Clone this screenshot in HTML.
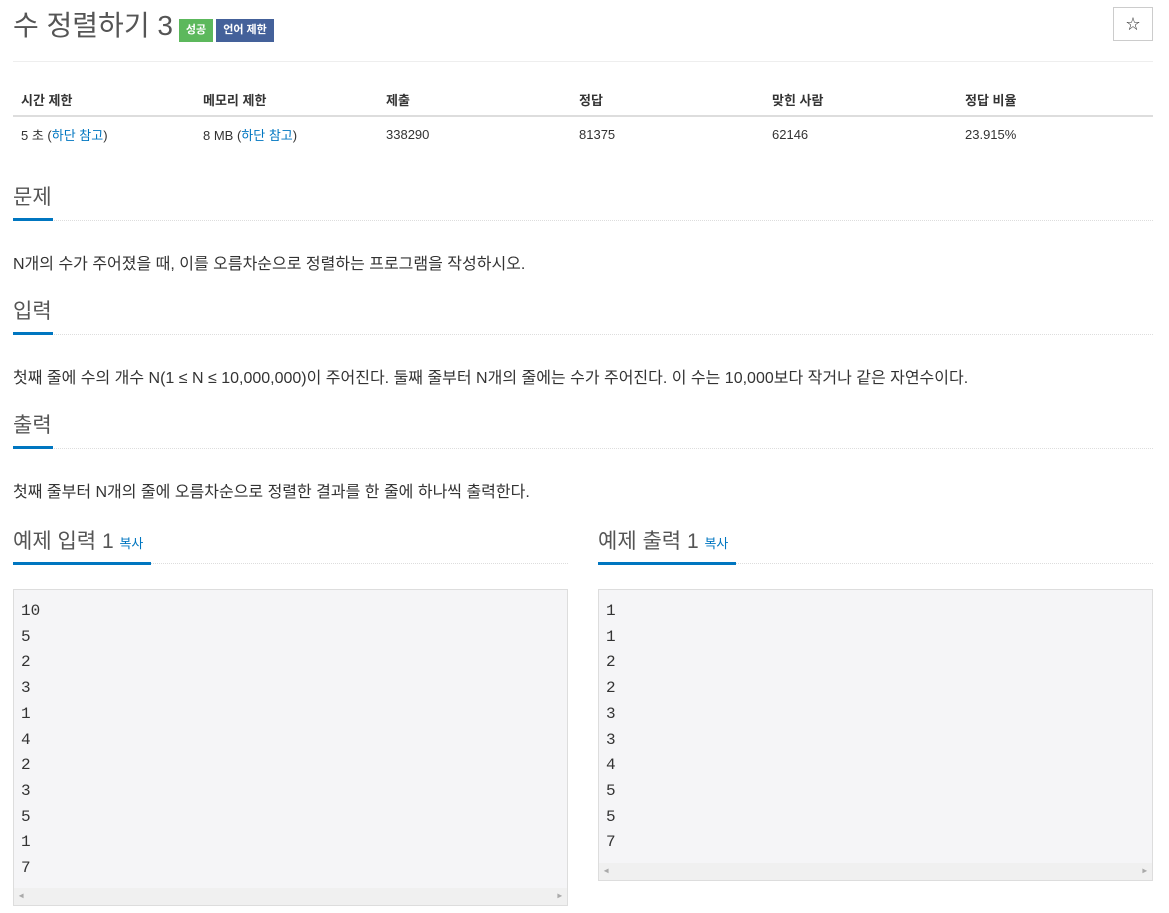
<!DOCTYPE html>
<html><head><meta charset="utf-8"><style>
*{box-sizing:border-box;margin:0;padding:0}
body{width:1169px;height:913px;background:#fff;font-family:"Liberation Sans","Noto Sans CJK KR",sans-serif;color:#333;font-size:14px;position:relative;overflow:hidden}
h1{position:absolute;left:13px;top:6px;font-size:28px;font-weight:400;color:#555;line-height:40px}
.lb{position:absolute;top:19px;height:23px;font-size:11px;color:#fff;line-height:23px;text-align:center;font-weight:bold}
.star{position:absolute;left:1113px;top:7px;width:40px;height:34px;border:1px solid #ccc;text-align:center;line-height:32px;font-size:14px;color:#333}
.hr{position:absolute;left:13px;width:1140px;height:1px;background:#eee}
table{position:absolute;left:13px;top:84px;width:1140px;border-collapse:collapse;font-size:13px}
th{text-align:left;font-weight:bold;height:32px;padding-left:8px;border-bottom:2px solid #ddd}
td{height:35px;padding-left:8px}
a{color:#0076c0;text-decoration:none}
.sh{position:absolute;font-size:21px;color:#555;line-height:30px}
.ul{position:absolute;height:3px;background:#0076c0}
.dl{position:absolute;height:0;border-top:1px dotted #ddd}
.p{position:absolute;left:13px;font-size:16px;color:#333;white-space:nowrap}
.box{position:absolute;background:#f5f5f7;border:1px solid #ddd;font-family:"Liberation Mono",monospace;font-size:16px;line-height:25.7px;padding:9px 0 0 7px;color:#333}
.sb{position:absolute;left:0;right:0;bottom:0;height:17px;background:#f0f0f0;font-size:8px;color:#aaa;line-height:17px}
</style></head><body>
<h1>수 정렬하기 3</h1>
<div class="lb" style="left:179px;width:34px;background:#5cb85c">성공</div>
<div class="lb" style="left:216px;width:58px;background:#44619a">언어 제한</div>
<div class="star">☆</div>
<div class="hr" style="top:61px"></div>
<table><tr><th style="width:182px">시간 제한</th><th style="width:183px">메모리 제한</th><th style="width:193px">제출</th><th style="width:193px">정답</th><th style="width:193px">맞힌 사람</th><th>정답 비율</th></tr>
<tr><td>5 초 (<a>하단 참고</a>)</td><td>8 MB (<a>하단 참고</a>)</td><td>338290</td><td>81375</td><td>62146</td><td>23.915%</td></tr></table>

<div class="sh" style="left:13px;top:183px">문제</div><div class="dl" style="left:13px;width:1140px;top:220px"></div><div class="ul" style="left:13px;width:40px;top:218px"></div>
<div class="p" style="top:250px">N개의 수가 주어졌을 때, 이를 오름차순으로 정렬하는 프로그램을 작성하시오.</div>
<div class="sh" style="left:13px;top:297px">입력</div><div class="dl" style="left:13px;width:1140px;top:334px"></div><div class="ul" style="left:13px;width:40px;top:332px"></div>
<div class="p" style="top:364px">첫째 줄에 수의 개수 N(1 ≤ N ≤ 10,000,000)이 주어진다. 둘째 줄부터 N개의 줄에는 수가 주어진다. 이 수는 10,000보다 작거나 같은 자연수이다.</div>
<div class="sh" style="left:13px;top:411px">출력</div><div class="dl" style="left:13px;width:1140px;top:448px"></div><div class="ul" style="left:13px;width:40px;top:446px"></div>
<div class="p" style="top:478px">첫째 줄부터 N개의 줄에 오름차순으로 정렬한 결과를 한 줄에 하나씩 출력한다.</div>

<div class="sh" style="left:13px;top:527px">예제 입력 1 <a style="font-size:13px">복사</a></div><div class="dl" style="left:13px;width:555px;top:563px"></div><div class="ul" style="left:13px;width:138px;top:562px"></div>
<div class="sh" style="left:598px;top:527px">예제 출력 1 <a style="font-size:13px">복사</a></div><div class="dl" style="left:598px;width:555px;top:563px"></div><div class="ul" style="left:598px;width:138px;top:562px"></div>

<div class="box" style="left:13px;top:589px;width:555px;height:317px">10<br>5<br>2<br>3<br>1<br>4<br>2<br>3<br>5<br>1<br>7<div class="sb">&nbsp;◀<span style="float:right">▶&nbsp;</span></div></div>
<div class="box" style="left:598px;top:589px;width:555px;height:292px">1<br>1<br>2<br>2<br>3<br>3<br>4<br>5<br>5<br>7<div class="sb">&nbsp;◀<span style="float:right">▶&nbsp;</span></div></div>
</body></html>
